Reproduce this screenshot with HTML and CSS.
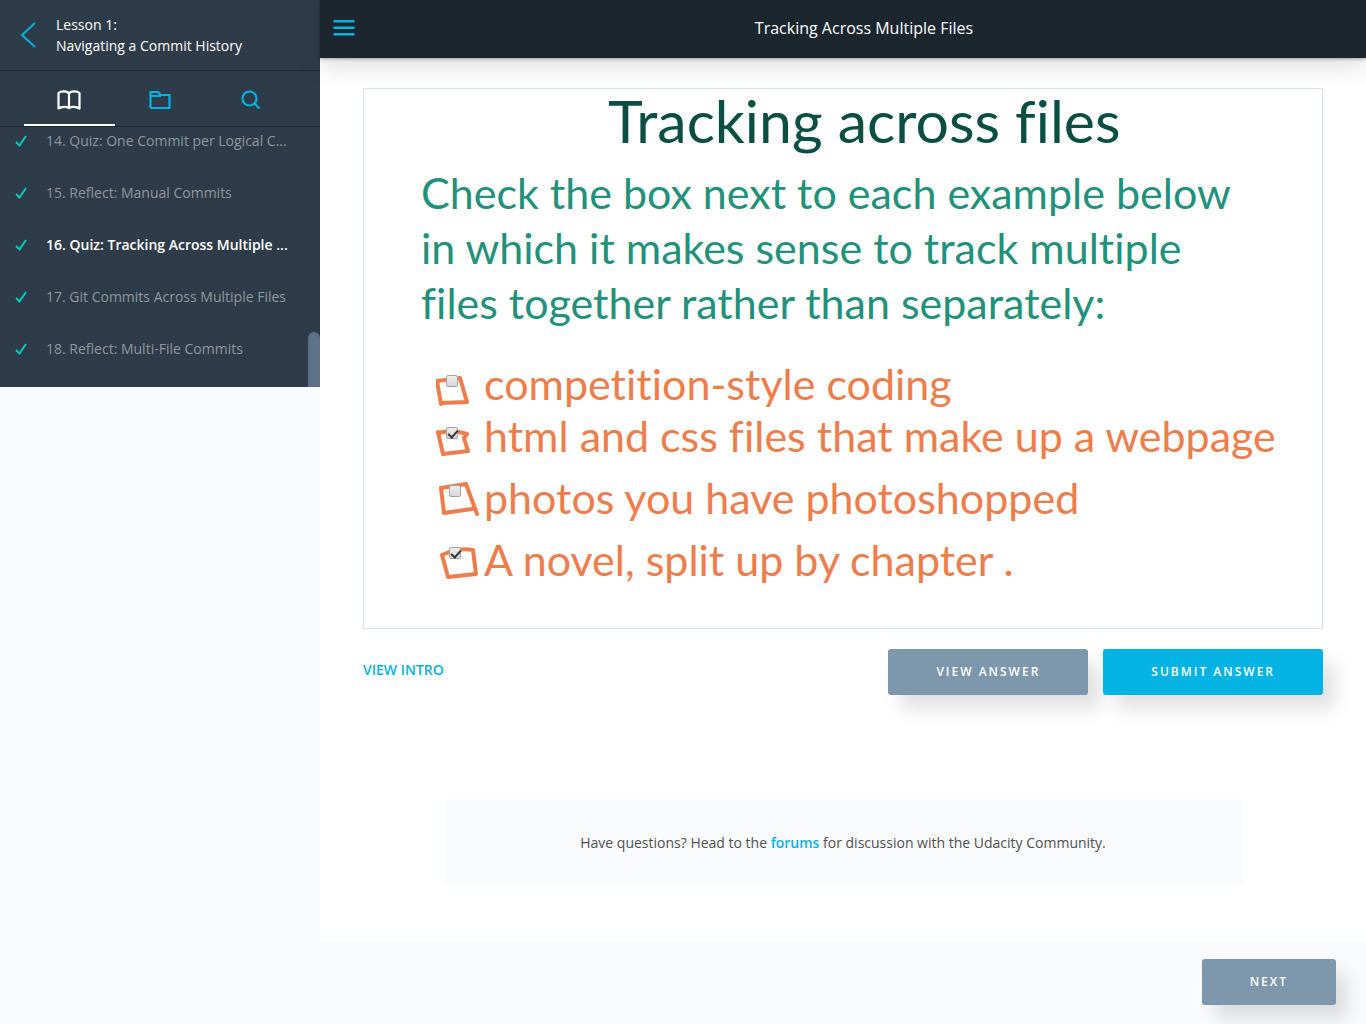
FILE: index.html
```html
<!DOCTYPE html>
<html lang="en">
<head>
<meta charset="utf-8">
<meta name="viewport" content="width=device-width, initial-scale=1">
<title>Tracking Across Multiple Files</title>
<link rel="stylesheet" href="styles.css">
</head>
<body>
<div class="app">
  <aside class="sidebar">
    <header class="lesson">
      <a class="lesson-back" href="#" aria-label="Back">
        <svg width="16" height="26" viewBox="0 0 16 26" fill="none" stroke="currentColor" stroke-width="2"><path d="M15 1L2 13L15 25"/></svg>
      </a>
      <p class="lesson-title">Lesson 1:<br>Navigating a Commit History</p>
    </header>
    <nav class="tabs">
      <button class="tab tab-active" type="button" aria-label="Lessons">
        <svg width="24" height="20" viewBox="0 0 24 20" fill="none" stroke="currentColor" stroke-width="2.200" stroke-linejoin="round"><path d="M12 3.500C10.500 1 4.500 0.500 1.500 3V18.500C4.500 16.500 10 16.500 12 18C14 16.500 19.500 16.500 22.500 18.500V3C19.500 0.500 13.500 1 12 3.500V18"/></svg>
      </button>
      <button class="tab" type="button" aria-label="Resources">
        <svg width="22" height="20" viewBox="0 0 22 20" fill="none" stroke="currentColor" stroke-width="2.200" stroke-linejoin="round"><path d="M1.500 18V2H9L11.500 5H20.500V18H1.500M1.500 6H12"/></svg>
      </button>
      <button class="tab" type="button" aria-label="Search">
        <svg width="20" height="20" viewBox="0 0 20 20" fill="none" stroke="currentColor" stroke-width="2.200"><circle cx="8.500" cy="8.500" r="7"/><path d="M13.500 13.500L18.500 18.500"/></svg>
      </button>
    </nav>
    <div class="list-wrap">
      <ul class="list">
        <li><a class="item" href="#"><svg class="check" viewBox="0 -2 12 14"><path d="M1 7L4.500 10.500L11 1"/></svg>14. Quiz: One Commit per Logical C...</a></li>
        <li><a class="item" href="#"><svg class="check" viewBox="0 -2 12 14"><path d="M1 7L4.500 10.500L11 1"/></svg>15. Reflect: Manual Commits</a></li>
        <li><a class="item item-current" href="#"><svg class="check" viewBox="0 -2 12 14"><path d="M1 7L4.500 10.500L11 1"/></svg>16. Quiz: Tracking Across Multiple ...</a></li>
        <li><a class="item" href="#"><svg class="check" viewBox="0 -2 12 14"><path d="M1 7L4.500 10.500L11 1"/></svg>17. Git Commits Across Multiple Files</a></li>
        <li><a class="item" href="#"><svg class="check" viewBox="0 -2 12 14"><path d="M1 7L4.500 10.500L11 1"/></svg>18. Reflect: Multi-File Commits</a></li>
      </ul>
      <div class="thumb"></div>
    </div>
  </aside>

  <div class="main">
    <header class="topbar">
      <button class="menu" type="button" aria-label="Menu">
        <svg width="22" height="16" viewBox="0 0 22 16" fill="currentColor"><path d="M0.500 0H21.500V2.400H0.500zM0.500 6.500H21.500V8.900H0.500zM0.500 13H21.500V15.400H0.500z"/></svg>
      </button>
      <h1 class="topbar-title">Tracking Across Multiple Files</h1>
    </header>

    <main class="content">
      <form class="quiz">
        <div class="board">
          <h2 class="board-title">Tracking across files</h2>
          <p class="board-text">Check the box next to each example below<br>in which it makes sense to track multiple<br>files together rather than separately:</p>
          <ul class="choices">
            <li class="choice">
              <svg class="sketch" viewBox="0 0 48 52"><path d="M1 16L5 39M1 16L24 13L31 37L5 38"/></svg>
              <input class="tick tick-a" type="checkbox" id="c1">
              <label for="c1">competition-style coding</label>
            </li>
            <li class="choice">
              <svg class="sketch" viewBox="0 0 48 52"><path d="M2 15L7 37L32 34L28 21L31 17Q17 12 2 16"/></svg>
              <input class="tick tick-a" type="checkbox" id="c2" checked>
              <label for="c2">html and css files that make up a webpage</label>
            </li>
            <li class="choice">
              <svg class="sketch" viewBox="0 0 48 52"><path d="M8 34L5 9L30 5L41 35M8 34L36 30"/></svg>
              <input class="tick tick-b" type="checkbox" id="c3">
              <label for="c3">photos you have photoshopped</label>
            </li>
            <li class="choice">
              <svg class="sketch" viewBox="0 0 48 52"><path d="M6 14L12 36L40 33L37 9Q22 6 6 14"/></svg>
              <input class="tick tick-b" type="checkbox" id="c4" checked>
              <label for="c4">A novel, split up by chapter .</label>
            </li>
          </ul>
        </div>
        <div class="actions">
          <a class="intro" href="#">VIEW INTRO</a>
          <div class="buttons">
            <button class="btn" type="button">VIEW ANSWER</button>
            <button class="btn btn-primary" type="submit">SUBMIT ANSWER</button>
          </div>
        </div>
      </form>
      <p class="forums">Have questions? Head to the <a class="forums-link" href="#">forums</a> for discussion with the Udacity Community.</p>
    </main>

    <footer class="footer">
      <button class="btn" type="button">NEXT</button>
    </footer>
  </div>
</div>
</body>
</html>
```
FILE: styles.css
```css
* { box-sizing: border-box; }

body {
  margin: 0;
  background: #fafbfd;
  color: #4f4f4f;
  font: 14px/21px "Open Sans", sans-serif;
}

h1, h2, p, ul { margin: 0; padding: 0; }
ul { list-style: none; }
a { color: #02b3e4; text-decoration: none; }
button { border: 0; padding: 0; font: inherit; cursor: pointer; }
svg { display: block; }

.app {
  display: flex;
  align-items: flex-start;
  min-height: 100vh;
}

/* Sidebar */
.sidebar {
  flex: 0 0 320px;
  background: #2e3c49;
}

.lesson {
  display: flex;
  align-items: center;
  gap: 20px;
  height: 71px;
  padding-left: 20px;
  border-bottom: 1px solid #1c262f;
}

.lesson-title { color: #fff; }

.tabs {
  display: flex;
  height: 56px;
  padding: 0 24px;
  border-bottom: 1px solid #1c262f;
}

.tab {
  flex: 1;
  display: flex;
  align-items: center;
  justify-content: center;
  background: none;
  color: #02b3e4;
  padding-top: 4px;
  border-bottom: 2px solid transparent;
}

.tab-active {
  color: #fff;
  border-bottom-color: #fff;
}

.list-wrap { position: relative; }

.list {
  display: flex;
  flex-direction: column;
  justify-content: flex-end;
  height: 260px;
  padding-bottom: 13px;
  overflow: hidden;
}

.item {
  display: flex;
  align-items: center;
  gap: 19px;
  height: 52px;
  padding-left: 15px;
  color: #8e979d;
  white-space: nowrap;
}

.item-current {
  color: #fff;
  font-weight: 600;
}

.check {
  width: 12px;
  height: 14px;
  fill: none;
  stroke: #02ccba;
  stroke-width: 2;
}

.thumb {
  position: absolute;
  right: 0;
  bottom: 0;
  width: 12px;
  height: 55px;
  border-radius: 6px 6px 0 0;
  background: #5d7286;
}

/* Main column */
.main {
  flex: 1;
  min-width: 0;
}

.topbar {
  position: relative;
  display: flex;
  align-items: center;
  height: 58px;
  padding: 0 13px 2px;
  background: #1c262f;
  box-shadow: 0 1px 3px rgba(0, 0, 0, 0.3), 0 8px 24px rgba(0, 0, 0, 0.14);
}

.menu {
  background: none;
  color: #02b3e4;
}

.topbar-title {
  flex: 1;
  padding-left: 20px;
  color: #fff;
  font-size: 16px;
  font-weight: 400;
  text-align: center;
}

.content {
  padding: 30px 43px 53px;
  background: #fff;
}

.board {
  min-height: 541px;
  padding-left: 57px;
  border: 1px solid #dbe2e8;
  color: #22917c;
  font: 43px/55px Lato, sans-serif;
  font-variant-ligatures: none;
  white-space: nowrap;
}

.board-title {
  padding-left: 187px;
  color: #0b4f42;
  font-size: 59px;
  font-weight: 400;
  line-height: 64px;
}

.board-text { padding-top: 12px; }

.choices {
  padding: 28px 0 0 15px;
  color: #ee7d4c;
}

.choice {
  position: relative;
  height: 52px;
  padding-left: 48px;
  line-height: 52px;
}

.choice + .choice + .choice { margin-top: 10px; }

.sketch {
  position: absolute;
  left: 0;
  top: 7px;
  width: 48px;
  height: 52px;
  fill: none;
  stroke: currentColor;
  stroke-width: 4;
  stroke-linecap: round;
  stroke-linejoin: round;
}

.tick {
  appearance: none;
  position: absolute;
  width: 12px;
  height: 12px;
  margin: 0;
  border: 1px solid #a3a3a3;
  border-radius: 2px;
  background: linear-gradient(#eee, #d8d8d8);
}

.tick-a { left: 10px; top: 17px; }
.tick-b { left: 13px; top: 13px; }

.tick:checked::after {
  content: "";
  display: block;
  width: 4px;
  height: 8px;
  margin-left: 3px;
  border: solid #333;
  border-width: 0 2px 2px 0;
  transform: rotate(42deg);
}

.actions {
  display: flex;
  justify-content: space-between;
  align-items: flex-start;
  padding-top: 20px;
}

.intro {
  padding-top: 10px;
  font-weight: 600;
}

.buttons {
  display: flex;
  gap: 15px;
}

.btn {
  height: 46px;
  padding: 0 48px 2px;
  border-radius: 3px;
  background: #7d97ad;
  box-shadow: 12px 14px 18px rgba(0, 0, 0, 0.12);
  color: #fff;
  font-size: 12px;
  font-weight: 600;
  letter-spacing: 2px;
}

.btn-primary { background: #02b3e4; }

.forums {
  max-width: 800px;
  margin: 104px auto 0;
  padding: 33px 20px;
  border-radius: 3px;
  background: #fafbfd;
  text-align: center;
}

.forums-link { font-weight: 600; }

.footer {
  display: flex;
  justify-content: flex-end;
  padding: 20px 30px;
}
```
